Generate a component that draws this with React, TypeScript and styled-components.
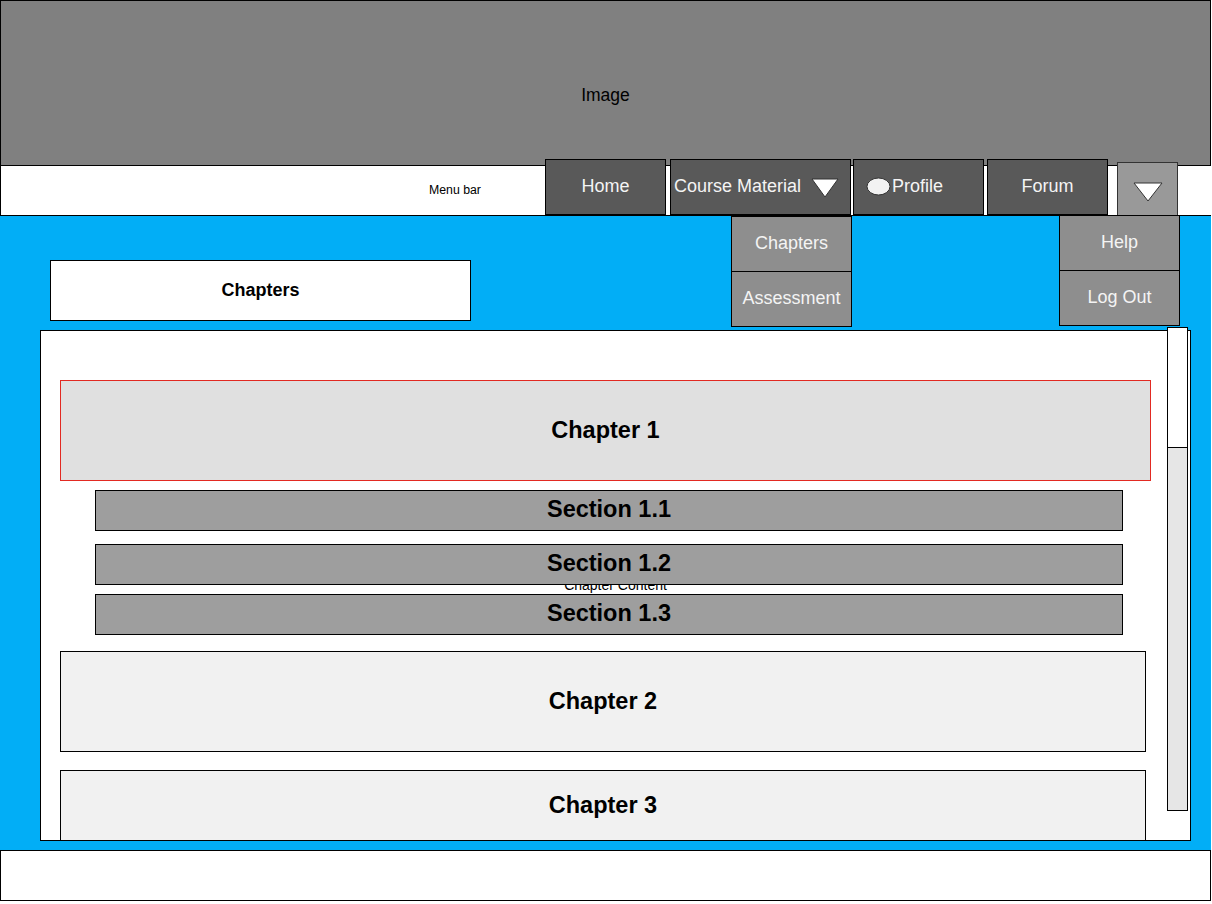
import React from "react";
import styled, { createGlobalStyle } from "styled-components";

const Global = createGlobalStyle`
  html, body { margin: 0; padding: 0; background: #ffffff; }
  body { font-family: "Liberation Sans", Arial, sans-serif; }
  * { box-sizing: border-box; }
`;

const Page = styled.div`
  width: 1211px;
  display: flex;
  flex-direction: column;
`;

const Header = styled.header`
  height: 165px;
  background: #808080;
  border: 1px solid #000;
  border-bottom: none;
  display: flex;
  justify-content: center;
  padding-top: 84px;
  font-size: 17.5px;
  color: #000;
`;

const MenuBar = styled.nav`
  position: relative;
  z-index: 5;
  height: 51px;
  background: #fff;
  border: 1px solid #000;
  border-right: none;
  display: flex;
  align-items: flex-start;
`;

const MenuLabel = styled.div`
  flex: 0 0 544px;
  height: 48px;
  display: flex;
  align-items: center;
  padding-left: 428px;
  font-size: 12.3px;
  color: #000;
`;

const NavItem = styled.div<{ $w: number; $gap: number }>`
  position: relative;
  flex: 0 0 ${(p) => p.$w}px;
  margin-left: ${(p) => p.$gap}px;
  margin-top: -7px;
`;

const NavButton = styled.div<{ $align?: "center" | "start"; $pad?: number }>`
  height: 56px;
  background: #595959;
  border: 1px solid #000;
  color: #f4f4f4;
  font-size: 18px;
  display: flex;
  align-items: center;
  justify-content: ${(p) => (p.$align === "start" ? "flex-start" : "center")};
  padding-left: ${(p) => p.$pad ?? 0}px;
  padding-bottom: 1px;
  white-space: nowrap;
`;

const ToggleButton = styled.div`
  height: 55px;
  margin-top: 3px;
  background: #999999;
  border: 1px solid #333;
  display: flex;
  align-items: center;
  justify-content: center;
  padding-top: 4px;
`;

const Menu = styled.div<{ $left: number; $top: number }>`
  position: absolute;
  left: ${(p) => p.$left}px;
  top: ${(p) => p.$top}px;
  width: 121px;
  border: 1px solid #000;
  background: #8e8e8e;
  display: flex;
  flex-direction: column;
`;

const MenuEntry = styled.div`
  height: 54px;
  display: flex;
  align-items: center;
  justify-content: center;
  color: #f4f4f4;
  font-size: 18px;
  padding-bottom: 1px;
  & + & { border-top: 1px solid #000; height: 55px; }
`;

const Main = styled.main`
  height: 634px;
  background: #02aef6;
  padding: 44px 0 9px 40px;
  display: flex;
  flex-direction: column;
  gap: 9px;
`;

const TitleBox = styled.div`
  margin-left: 10px;
  width: 421px;
  height: 61px;
  background: #fff;
  border: 1px solid #000;
  display: flex;
  align-items: center;
  justify-content: center;
  font-weight: bold;
  font-size: 18px;
  color: #000;
`;

const PanelFrame = styled.div`
  position: relative;
  width: 1151px;
  height: 511px;
`;

const Panel = styled.section`
  position: relative;
  height: 100%;
  background: #fff;
  border: 1px solid #000;
  overflow: hidden;
  padding: 49px 0 0 19px;
`;

const PanelLabel = styled.div`
  position: absolute;
  inset: 0;
  display: flex;
  align-items: center;
  justify-content: center;
  font-size: 14px;
  color: #000;
  padding-bottom: 2px;
`;

const List = styled.div`
  position: relative;
  display: flex;
  flex-direction: column;
  align-items: flex-start;
`;

const Chapter = styled.div<{ $w: number; $mt: number; $h?: number; $active?: boolean }>`
  width: ${(p) => p.$w}px;
  height: ${(p) => p.$h ?? 101}px;
  margin-top: ${(p) => p.$mt}px;
  background: ${(p) => (p.$active ? "#e0e0e0" : "#f1f1f1")};
  border: 1px solid ${(p) => (p.$active ? "#e22a22" : "#000")};
  display: flex;
  align-items: center;
  justify-content: center;
  font-weight: bold;
  font-size: 23.5px;
  color: #000;
  flex-shrink: 0;
`;

const Section = styled.div<{ $mt: number }>`
  width: 1028px;
  height: 41px;
  margin-left: 35px;
  margin-top: ${(p) => p.$mt}px;
  background: #9e9e9e;
  border: 1px solid #000;
  display: flex;
  align-items: center;
  justify-content: center;
  padding-bottom: 2px;
  font-weight: bold;
  font-size: 23.5px;
  color: #000;
  flex-shrink: 0;
`;

const Scrollbar = styled.div`
  position: absolute;
  top: -3px;
  right: 3px;
  width: 21px;
  height: 484px;
  border: 1px solid #000;
  background: #e6e6e6;
  display: flex;
  flex-direction: column;
`;

const Thumb = styled.div`
  height: 120px;
  background: #fff;
  border-bottom: 1px solid #000;
`;

const Footer = styled.footer`
  height: 51px;
  background: #fff;
  border: 1px solid #000;
  width: 1211px;
`;

const Caret = ({ w }: { w: number }) => (
  <svg width={w} height={20} viewBox={`0 0 ${w} 20`}>
    <polygon
      points={`1,1 ${w - 1},1 ${w / 2},19`}
      fill="#ffffff"
      stroke="#333"
      strokeWidth={1}
    />
  </svg>
);

const Avatar = () => (
  <svg width={25} height={19} viewBox="0 0 25 19" style={{ marginRight: 1 }}>
    <ellipse cx={12.5} cy={9.5} rx={11.5} ry={8.5} fill="#f2f2f2" stroke="#333" strokeWidth={1} />
  </svg>
);

const CaretGap = styled.span`
  display: inline-flex;
  margin-left: 10px;
  margin-top: 3px;
`;

export default function App() {
  return (
    <Page>
      <Global />
      <Header>Image</Header>
      <MenuBar>
        <MenuLabel>Menu bar</MenuLabel>
        <NavItem $w={121} $gap={0}>
          <NavButton>Home</NavButton>
        </NavItem>
        <NavItem $w={181} $gap={4}>
          <NavButton $align="start" $pad={3}>
            Course Material
            <CaretGap>
              <Caret w={28} />
            </CaretGap>
          </NavButton>
          <Menu $left={61} $top={57}>
            <MenuEntry>Chapters</MenuEntry>
            <MenuEntry>Assessment</MenuEntry>
          </Menu>
        </NavItem>
        <NavItem $w={131} $gap={2}>
          <NavButton $align="start" $pad={12}>
            <Avatar />
            Profile
          </NavButton>
        </NavItem>
        <NavItem $w={121} $gap={3}>
          <NavButton>Forum</NavButton>
        </NavItem>
        <NavItem $w={61} $gap={9}>
          <ToggleButton>
            <Caret w={30} />
          </ToggleButton>
          <Menu $left={-58} $top={56}>
            <MenuEntry>Help</MenuEntry>
            <MenuEntry>Log Out</MenuEntry>
          </Menu>
        </NavItem>
      </MenuBar>
      <Main>
        <TitleBox>Chapters</TitleBox>
        <PanelFrame>
          <Panel>
            <PanelLabel>Chapter Content</PanelLabel>
            <List>
              <Chapter $w={1091} $mt={0} $active>
                Chapter 1
              </Chapter>
              <Section $mt={9}>Section 1.1</Section>
              <Section $mt={13}>Section 1.2</Section>
              <Section $mt={9}>Section 1.3</Section>
              <Chapter $w={1086} $mt={16}>
                Chapter 2
              </Chapter>
              <Chapter $w={1086} $mt={18} $h={71}>
                Chapter 3
              </Chapter>
            </List>
          </Panel>
          <Scrollbar>
            <Thumb />
          </Scrollbar>
        </PanelFrame>
      </Main>
      <Footer />
    </Page>
  );
}
